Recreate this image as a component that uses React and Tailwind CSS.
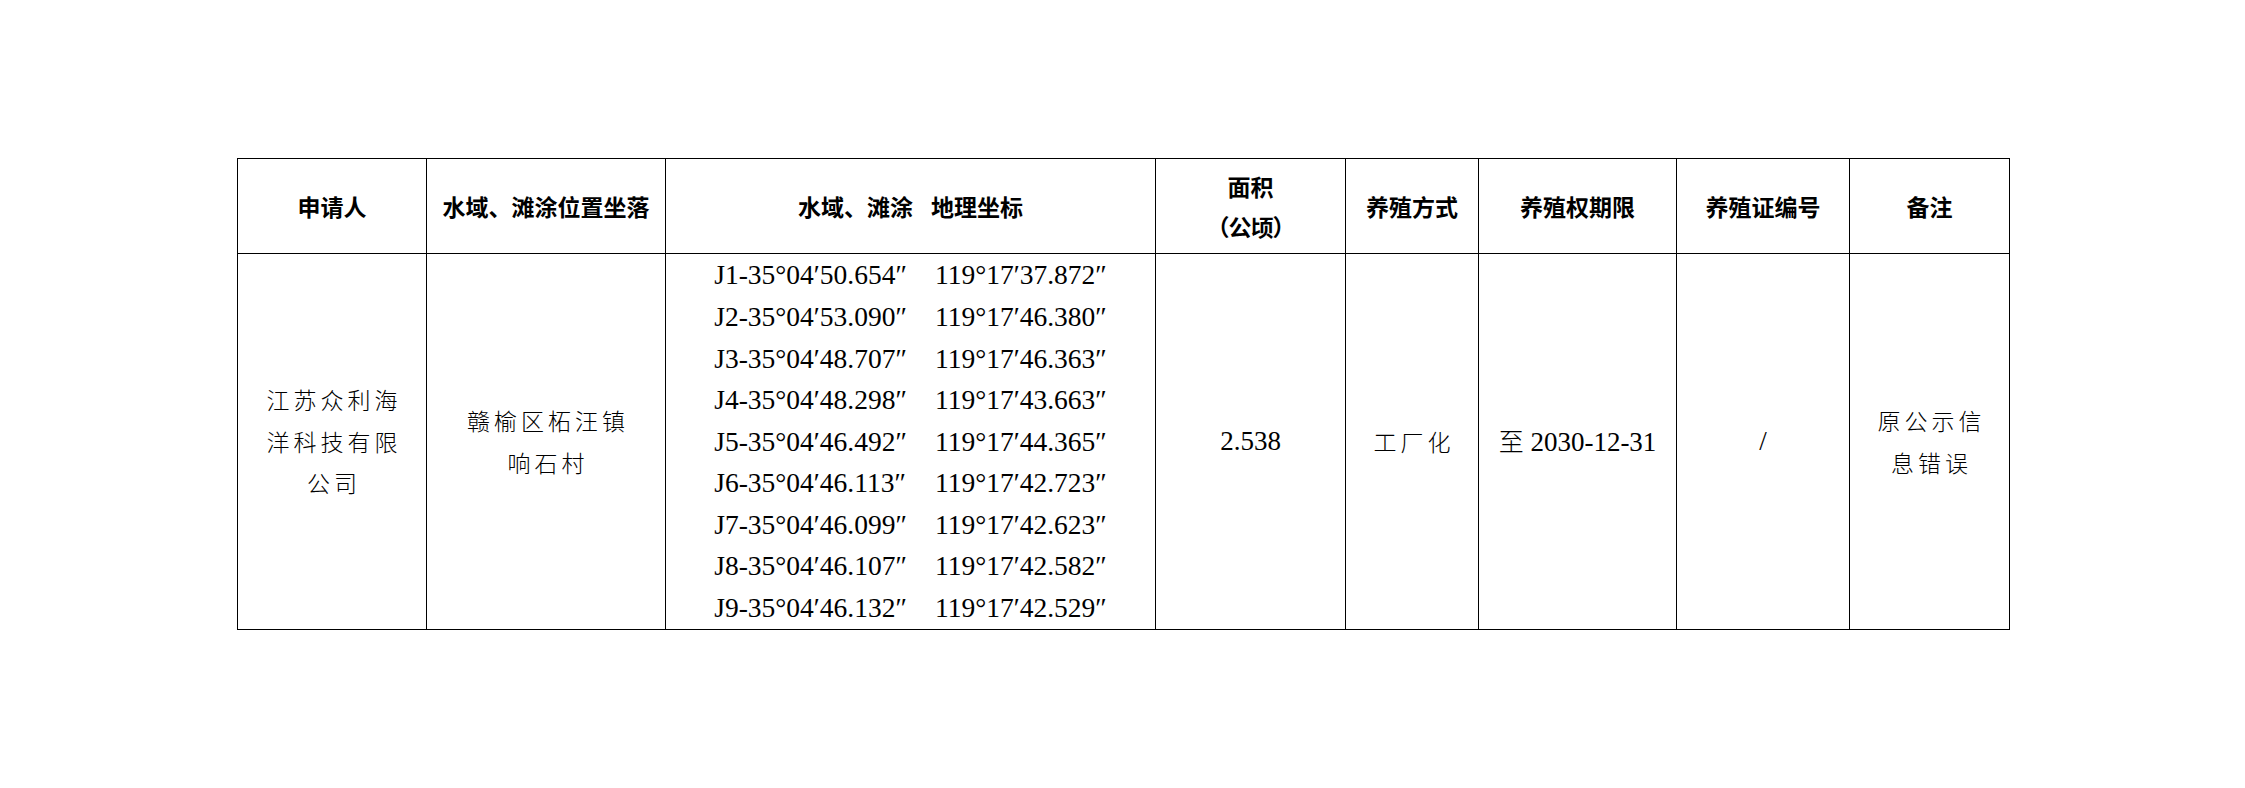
const coords = [
  ["J1-35°04′50.654″", "119°17′37.872″"],
  ["J2-35°04′53.090″", "119°17′46.380″"],
  ["J3-35°04′48.707″", "119°17′46.363″"],
  ["J4-35°04′48.298″", "119°17′43.663″"],
  ["J5-35°04′46.492″", "119°17′44.365″"],
  ["J6-35°04′46.113″", "119°17′42.723″"],
  ["J7-35°04′46.099″", "119°17′42.623″"],
  ["J8-35°04′46.107″", "119°17′42.582″"],
  ["J9-35°04′46.132″", "119°17′42.529″"],
];

const head =
  "flex flex-col items-center justify-center border-r border-b border-black font-['Noto_Sans_CJK_SC',sans-serif] text-[23px] font-bold leading-[40px] whitespace-nowrap";
const cjkCell =
  "flex items-center justify-center border-r border-b border-black font-['Noto_Sans_CJK_SC',sans-serif] text-[23px] font-light tracking-[4px] pl-[4px] leading-[41.6px] text-center";
const serifCell =
  "flex items-center justify-center border-r border-b border-black font-['Liberation_Serif','Noto_Sans_CJK_SC',serif] text-[27px] leading-[41.6px]";

export default function App() {
  return (
    <div className="min-h-screen bg-white pt-[158px] pl-[237px]">
      <div className="grid w-fit grid-cols-[189px_239px_490px_190px_133px_198px_173px_160px] grid-rows-[95px_376px] border-l border-t border-black text-black">
        {/* Header row */}
        <div className={head}>申请人</div>
        <div className={head}>水域、滩涂位置坐落</div>
        <div className={head}>
          <span>
            水域、滩涂<span className="inline-block w-[18px]" />地理坐标
          </span>
        </div>
        <div className={head}>
          <span>面积</span>
          <span className="tracking-[-1px]">（公顷）</span>
        </div>
        <div className={head}>养殖方式</div>
        <div className={head}>养殖权期限</div>
        <div className={head}>养殖证编号</div>
        <div className={head}>备注</div>

        {/* Data row */}
        <div className={cjkCell}>
          <p>
            江苏众利海
            <br />
            洋科技有限
            <br />
            公司
          </p>
        </div>
        <div className={cjkCell}>
          <p>
            赣榆区柘汪镇
            <br />
            响石村
          </p>
        </div>
        <div className={serifCell}>
          <div className="grid grid-cols-[auto_auto] gap-x-[28px] whitespace-nowrap text-[27.5px]">
            {coords.map(([a, b]) => (
              <div key={a} className="contents">
                <span>{a}</span>
                <span>{b}</span>
              </div>
            ))}
          </div>
        </div>
        <div className={serifCell}>2.538</div>
        <div className={cjkCell}>工厂化</div>
        <div className={serifCell}>
          <span>
            <span className="font-['Noto_Sans_CJK_SC',sans-serif] font-light text-[25px]">至</span> 2030-12-31
          </span>
        </div>
        <div className={serifCell}>/</div>
        <div className={cjkCell}>
          <p>
            原公示信
            <br />
            息错误
          </p>
        </div>
      </div>
    </div>
  );
}
